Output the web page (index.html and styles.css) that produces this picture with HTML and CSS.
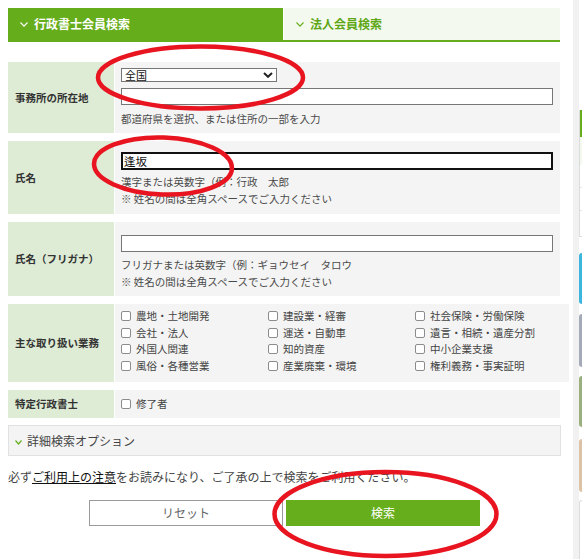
FILE: index.html
```html
<!DOCTYPE html>
<html lang="ja">
<head>
<meta charset="utf-8">
<title>会員検索</title>
<link rel="stylesheet" href="styles.css">
</head>
<body>
<div class="page">
  <main class="search">
    <div class="tabs">
      <div class="tab tab-active">
        <svg class="chev" width="8" height="5" viewBox="0 0 8 5"><polyline points="0.5,0.5 4,4.2 7.5,0.5"/></svg>
        <span>行政書士会員検索</span>
      </div>
      <div class="tab">
        <svg class="chev" width="8" height="5" viewBox="0 0 8 5"><polyline points="0.5,0.5 4,4.2 7.5,0.5"/></svg>
        <span>法人会員検索</span>
      </div>
    </div>

    <div class="form">
      <div class="row">
        <div class="label">事務所の所在地</div>
        <div class="value value-loc">
          <div class="select-wrap">
            <select class="select"><option>全国</option></select>
            <svg class="select-arrow" width="10" height="6" viewBox="0 0 10 6"><polyline points="1,1 5,4.8 9,1"/></svg>
          </div>
          <input class="text" type="text">
          <p class="hint hint-loc">都道府県を選択、または住所の一部を入力</p>
        </div>
      </div>

      <div class="row">
        <div class="label">氏名</div>
        <div class="value value-name">
          <input class="text text-focus" type="text" value="逢坂">
          <p class="hint">漢字または英数字（例：行政　太郎</p>
          <p class="hint">※ 姓名の間は全角スペースでご入力ください</p>
        </div>
      </div>

      <div class="row">
        <div class="label">氏名（フリガナ）</div>
        <div class="value value-kana">
          <input class="text" type="text">
          <p class="hint">フリガナまたは英数字（例：ギョウセイ　タロウ</p>
          <p class="hint">※ 姓名の間は全角スペースでご入力ください</p>
        </div>
      </div>

      <div class="row">
        <div class="label">主な取り扱い業務</div>
        <div class="value value-checks">
          <div class="checks">
            <label class="check"><input type="checkbox"><span>農地・土地開発</span></label>
            <label class="check"><input type="checkbox"><span>建設業・経審</span></label>
            <label class="check"><input type="checkbox"><span>社会保険・労働保険</span></label>
            <label class="check"><input type="checkbox"><span>会社・法人</span></label>
            <label class="check"><input type="checkbox"><span>運送・自動車</span></label>
            <label class="check"><input type="checkbox"><span>遺言・相続・遺産分割</span></label>
            <label class="check"><input type="checkbox"><span>外国人関連</span></label>
            <label class="check"><input type="checkbox"><span>知的資産</span></label>
            <label class="check"><input type="checkbox"><span>中小企業支援</span></label>
            <label class="check"><input type="checkbox"><span>風俗・各種営業</span></label>
            <label class="check"><input type="checkbox"><span>産業廃棄・環境</span></label>
            <label class="check"><input type="checkbox"><span>権利義務・事実証明</span></label>
          </div>
        </div>
      </div>

      <div class="row row-short">
        <div class="label">特定行政書士</div>
        <div class="value value-short">
          <label class="check"><input type="checkbox"><span>修了者</span></label>
        </div>
      </div>
    </div>

    <div class="detail">
      <svg class="chev-green" width="7" height="5" viewBox="0 0 7 5"><polyline points="0.5,0.5 3.5,4 6.5,0.5"/></svg>
      <span>詳細検索オプション</span>
    </div>

    <p class="notice">必ず<a class="notice-link" href="#">ご利用上の注意</a>をお読みになり、ご了承の上で検索をご利用ください。</p>

    <div class="buttons">
      <button class="btn btn-reset" type="button">リセット</button>
      <button class="btn btn-search" type="button">検索</button>
    </div>
  </main>

  <aside class="sidebar">
    <div class="rail"></div>
    <div class="side">
      <div class="side-card">
        <div class="side-card-head"></div>
        <div class="side-card-sub"></div>
        <div class="side-card-line"></div>
        <div class="side-card-line"></div>
      </div>
      <div class="side-img side-img-blue"></div>
      <div class="side-img side-img-gray"></div>
      <div class="side-img side-img-green"></div>
      <div class="side-img side-img-beige"></div>
      <div class="side-box"></div>
    </div>
  </aside>

  <svg class="annotations" width="582" height="559" viewBox="0 0 582 559">
    <ellipse cx="200.5" cy="77.5" rx="102.5" ry="31"/>
    <ellipse cx="163" cy="166" rx="69" ry="28.5" transform="rotate(2 163 166)"/>
    <ellipse cx="385.5" cy="514" rx="111" ry="42"/>
  </svg>
</div>
</body>
</html>
```

FILE: styles.css
```css
* {
  box-sizing: border-box;
}

body {
  margin: 0;
  background: #fff;
  color: #333;
  font-family: "Noto Sans CJK JP", "Noto Sans", sans-serif;
}

.page {
  position: relative;
  display: flex;
  width: 582px;
  height: 559px;
  overflow: hidden;
}

.search {
  flex: 0 0 553px;
  margin-left: 8px;
  padding-top: 8px;
}

/* tabs */
.tabs {
  display: flex;
  gap: 1px;
  width: 552px;
  height: 34px;
  border-bottom: 2px solid #66ad1b;
}

.tab {
  display: flex;
  align-items: center;
  gap: 6px;
  flex: 0 0 276px;
  padding-left: 12px;
  background: #f3f9ee;
  color: #5fa717;
  font-size: 12px;
  font-weight: bold;
  line-height: 16px;
}

.tab-active {
  flex-basis: 275px;
  background: #66ad1b;
  color: #fff;
}

.chev {
  fill: none;
  stroke: #66ad1b;
  stroke-width: 1.1;
}

.tab-active .chev {
  stroke: #fff;
}

/* form rows */
.form {
  display: flex;
  flex-direction: column;
  gap: 8px;
  width: 552px;
  margin-top: 20px;
}

.row {
  display: grid;
  grid-template-columns: 106px 1fr;
  column-gap: 1px;
}

.label {
  display: flex;
  align-items: center;
  padding-left: 7px;
  background: #deebd5;
  color: #333;
  font-size: 10.5px;
  font-weight: bold;
  line-height: 14px;
}

.value {
  padding: 6px 7px 6px 6px;
  background: #f4f4f4;
  color: #4a4a4a;
  font-size: 10.5px;
  line-height: 16.5px;
}

.value-loc {
  padding-top: 6px;
  padding-bottom: 6px;
}

.value-name {
  padding-top: 11px;
  padding-bottom: 7px;
}

.value-kana {
  padding-top: 13px;
  padding-bottom: 6px;
}

.value-checks {
  padding-top: 4px;
  padding-bottom: 8px;
}

.value-short {
  display: flex;
  align-items: center;
  height: 28px;
  padding-top: 0;
  padding-bottom: 0;
}

.select-wrap {
  position: relative;
  width: 156px;
  height: 14px;
  margin-bottom: 6px;
}

.select {
  display: block;
  width: 100%;
  height: 14px;
  margin: 0;
  padding: 0 3px;
  border: 1px solid #767676;
  border-radius: 0;
  background: #fff;
  color: #111;
  font-family: inherit;
  font-size: 11px;
  line-height: 12px;
  appearance: none;
  -webkit-appearance: none;
}

.select-arrow {
  position: absolute;
  top: 4px;
  right: 4px;
  fill: none;
  stroke: #222;
  stroke-width: 2;
}

.text {
  display: block;
  width: 100%;
  height: 17px;
  margin: 0;
  padding: 0 2px;
  border: 1px solid #767676;
  border-radius: 0;
  background: #fff;
  color: #111;
  font-family: inherit;
  font-size: 11.5px;
  line-height: 15px;
}

.text-focus {
  height: 18px;
  border: 2px solid #111;
  padding-left: 1px;
  outline: none;
}

.value-kana .text {
  margin-bottom: 5px;
}

.value-name .text {
  margin-bottom: 4px;
}

.hint {
  margin: 0;
  white-space: nowrap;
}

.hint-loc {
  margin-top: 6px;
  line-height: 16px;
}

/* checkboxes */
.checks {
  display: grid;
  grid-template-columns: repeat(3, 147px);
}

.check {
  display: flex;
  align-items: center;
  gap: 5px;
  white-space: nowrap;
  color: #444;
}

.check input {
  flex: 0 0 10px;
  width: 10px;
  height: 10px;
  margin: 0;
  border: 1px solid #8c8c8c;
  border-radius: 2px;
  background: #fff;
  appearance: none;
  -webkit-appearance: none;
}

/* detail option */
.detail {
  display: flex;
  align-items: center;
  gap: 5px;
  width: 553px;
  height: 31px;
  margin-top: 7px;
  padding-left: 6px;
  border: 1px solid #e1e1e1;
  background: #f4f4f4;
  color: #444;
  font-size: 12px;
  line-height: 16px;
}

.chev-green {
  margin-top: 3px;
  fill: none;
  stroke: #66ad1b;
  stroke-width: 1.2;
}

/* notice + buttons */
.notice {
  margin: 13px 0 0;
  color: #444;
  font-size: 12px;
  line-height: 16px;
  white-space: nowrap;
}

.notice-link {
  color: #111;
  text-decoration: underline;
}

.buttons {
  display: flex;
  justify-content: center;
  gap: 3px;
  margin-top: 15px;
}

.btn {
  width: 194px;
  height: 26px;
  margin: 0;
  padding: 0;
  border-radius: 0;
  font-family: inherit;
  font-size: 12px;
  line-height: 16px;
  cursor: pointer;
}

.btn-reset {
  border: 1px solid #9a9a9a;
  background: #fff;
  color: #666;
}

.btn-search {
  border: 0;
  background: #66ae1b;
  color: #fff;
}

/* sidebar sliver */
.sidebar {
  display: flex;
  flex: 0 0 9px;
  margin-left: 12px;
}

.rail {
  flex: 0 0 6px;
  background: #f1f1f1;
}

.side {
  display: flex;
  flex-direction: column;
  flex: 0 0 3px;
  padding-top: 110px;
}

.side-card {
  height: 130px;
  border-left: 1px solid #dcdcdc;
  border-bottom: 1px solid #dcdcdc;
}

.side-card-head {
  height: 27px;
  background: #66ad1b;
}

.side-card-sub {
  height: 28px;
  background: #f3f9ee;
}

.side-card-line {
  height: 23px;
  border-bottom: 1px solid #e3e3e3;
}

.side-img {
  border-radius: 3px 0 0 3px;
}

.side-img-blue {
  height: 52px;
  margin-top: 16px;
  background: #3db6df;
}

.side-img-gray {
  height: 54px;
  margin-top: 10px;
  background: #a4aab8;
}

.side-img-green {
  height: 52px;
  margin-top: 9px;
  background: #9bb07f;
}

.side-img-beige {
  height: 55px;
  margin-top: 12px;
  background: #dcc3a6;
}

.side-box {
  height: 60px;
  margin-top: 8px;
  border-left: 1px solid #dcdcdc;
  border-top: 1px solid #dcdcdc;
  border-radius: 3px 0 0 0;
}

/* red hand-drawn annotation rings over the screenshot */
.annotations {
  position: absolute;
  top: 0;
  left: 0;
  pointer-events: none;
}

.annotations ellipse {
  fill: none;
  stroke: #e8141f;
  stroke-width: 4.5;
}
```
